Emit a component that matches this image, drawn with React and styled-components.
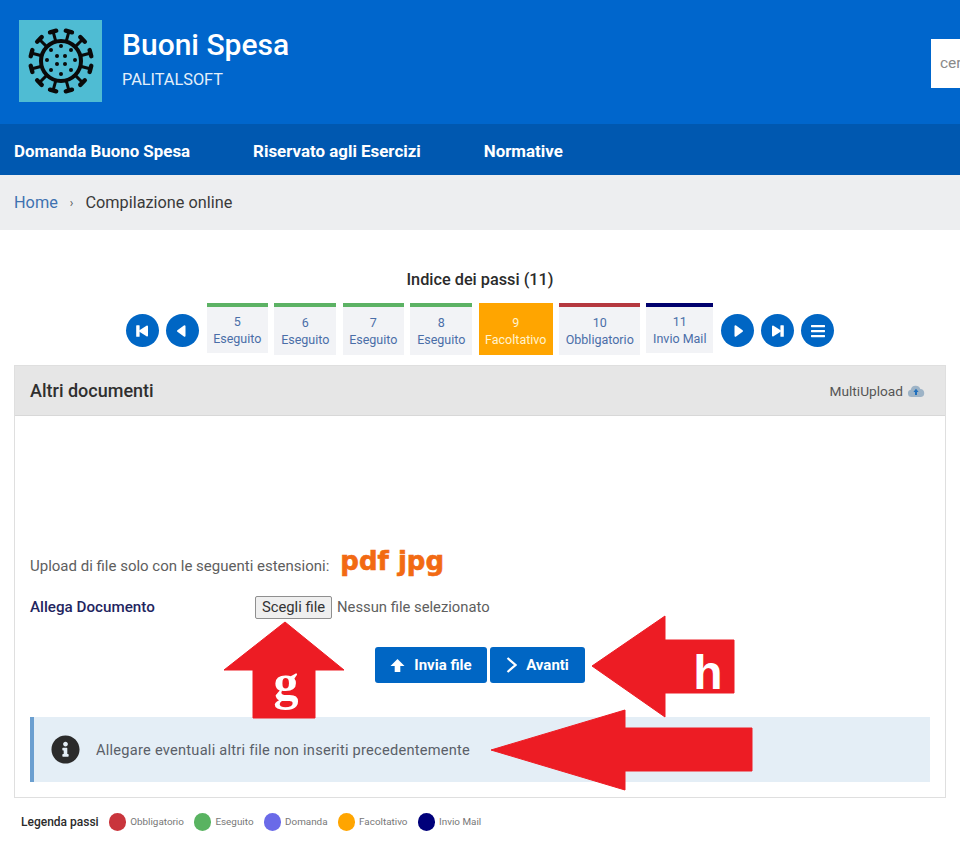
import styled, { createGlobalStyle } from "styled-components";
import { FaBars, FaInfoCircle } from "react-icons/fa";

const GlobalStyle = createGlobalStyle`
  html, body {
    margin: 0;
    padding: 0;
    background: #ffffff;
    font-family: "Roboto", "Liberation Sans", sans-serif;
  }
  * { box-sizing: border-box; }
`;

const Page = styled.div`
  position: relative;
  width: 960px;
  height: 858px;
  overflow: hidden;
`;

// header
const Header = styled.header`
  height: 124px;
  background: #0066cc;
  display: flex;
  align-items: flex-start;
  padding: 20px 0 0 19px;
`;

const LogoBox = styled.div`
  width: 83px;
  height: 82px;
  background: #4fbcd3;
  display: flex;
  align-items: center;
  justify-content: center;
  flex-shrink: 0;
`;

const Brand = styled.div`
  margin-left: 20px;
  flex: 0 0 809px;
  color: #ffffff;
`;

const BrandTitle = styled.h1`
  margin: 6px 0 0;
  font-size: 30px;
  line-height: 38px;
  font-weight: 500;
`;

const BrandSub = styled.div`
  margin-top: 6px;
  font-size: 16.3px;
  line-height: 20px;
  color: #e3effa;
`;

const SearchBox = styled.div`
  flex: 0 0 120px;
  height: 49px;
  margin-top: 19px;
  background: #ffffff;
  color: #8a8a8a;
  font-size: 15.5px;
  line-height: 49px;
  padding-left: 9px;
`;

// nav
const Nav = styled.nav`
  height: 51px;
  background: #0058b0;
  display: flex;
  align-items: center;
  gap: 63px;
  padding-left: 14px;
`;

const NavItem = styled.a`
  color: #ffffff;
  font-size: 16.9px;
  font-weight: 700;
  position: relative;
  top: 1px;
`;

const Breadcrumb = styled.div`
  height: 55px;
  background: #edeef0;
  display: flex;
  align-items: center;
  padding-left: 14px;
  font-size: 16.3px;
  color: #3a3a3a;
`;

const Crumb = styled.a`
  color: #3f72b0;
`;

const Sep = styled.span`
  margin: 0 12px;
  font-size: 12px;
  color: #555555;
`;

// steps
const StepTitle = styled.h2`
  margin: 40px 0 0;
  text-align: center;
  font-size: 16.3px;
  line-height: 20px;
  font-weight: 500;
  color: #2b2b2b;
`;

const Steps = styled.div`
  margin-top: 13px;
  height: 52px;
  display: flex;
  justify-content: center;
  align-items: flex-start;
`;

const RoundButton = styled.button`
  width: 33px;
  height: 33px;
  margin: 11px ${(p) => p.$gapRight ?? 7}px 0 0;
  padding: 0;
  border: 0;
  border-radius: 50%;
  background: #0066c4;
  color: #ffffff;
  display: flex;
  align-items: center;
  justify-content: center;
`;

const Step = styled.div`
  width: ${(p) => p.$width}px;
  height: ${(p) => (p.$short ? 50 : 52)}px;
  margin-right: ${(p) => p.$gapRight ?? 6.5}px;
  border-top: 4px solid ${(p) => p.$color};
  background: ${(p) => (p.$active ? "#ffa500" : "#f2f3f6")};
  color: ${(p) => (p.$active ? "#fff3cf" : "#4a6ea8")};
  font-size: 12.5px;
  line-height: 17px;
  text-align: center;
  padding-top: ${(p) => (p.$short ? 6 : 7)}px;
`;

// panel
const Panel = styled.section`
  margin: 10px 14px 0;
  height: 433px;
  border: 1px solid #dfdfdf;
  display: flex;
  flex-direction: column;
`;

const PanelHead = styled.div`
  height: 50px;
  background: #e6e6e6;
  border-bottom: 1px solid #d8d8d8;
  display: flex;
  align-items: center;
  justify-content: space-between;
  padding: 0 20px 0 15px;
`;

const PanelTitle = styled.h3`
  margin: 0;
  font-size: 18px;
  font-weight: 500;
  color: #2f2f2f;
`;

const MultiUpload = styled.div`
  display: flex;
  align-items: center;
  gap: 4px;
  font-size: 13.7px;
  color: #555555;
`;

const PanelBody = styled.div`
  flex: 1;
  padding: 133px 15px 0;
  display: flex;
  flex-direction: column;
`;

const UploadRow = styled.div`
  height: 34px;
  display: flex;
  align-items: center;
  color: #5e5e5e;
  font-size: 15px;
`;

const Extensions = styled.span`
  margin-left: 11px;
  font-family: "DejaVu Sans", sans-serif;
  font-weight: 700;
  font-size: 26px;
  line-height: 30px;
  -webkit-text-stroke: 0.6px #f26a13;
  color: #f26a13;
  position: relative;
  top: -5px;
`;

const FileRow = styled.div`
  margin-top: 12px;
  height: 24px;
  display: flex;
  align-items: center;
  color: #5e5e5e;
  font-size: 14.8px;
`;

const FileLabel = styled.label`
  width: 225px;
  font-weight: 500;
  font-size: 15.2px;
  color: #1f2560;
`;

const FileButton = styled.button`
  width: 77px;
  height: 23px;
  margin-right: 5px;
  padding: 0;
  background: #efefef;
  border: 1px solid #8f8f8f;
  border-radius: 2px;
  font: inherit;
  color: #333333;
`;

const Actions = styled.div`
  margin-top: 28px;
  padding-left: 345px;
  display: flex;
  gap: 3px;
`;

const ActionButton = styled.button`
  height: 36px;
  width: ${(p) => p.$width}px;
  padding: 0;
  border: 0;
  border-radius: 3px;
  background: #0066c4;
  color: #ffffff;
  font: inherit;
  font-size: 15px;
  font-weight: 700;
  display: flex;
  align-items: center;
  justify-content: center;
  gap: 9px;
`;

const Notice = styled.div`
  margin-top: 34px;
  height: 65px;
  background: #e4eef6;
  border-left: 4px solid #6b9fd0;
  display: flex;
  align-items: center;
  gap: 16px;
  padding-left: 17px;
  color: #5a6068;
  font-size: 14.6px;
  letter-spacing: 0.25px;
`;

// legend
const Legend = styled.div`
  margin-top: 15px;
  padding-left: 21px;
  display: flex;
  align-items: center;
  color: #777777;
  font-size: 9.9px;
`;

const LegendTitle = styled.span`
  margin-right: 10px;
  font-size: 12px;
  font-weight: 500;
  color: #2b2b2b;
`;

const Dot = styled.span`
  width: 17.5px;
  height: 17.5px;
  margin-right: 4px;
  border-radius: 50%;
  background: ${(p) => p.$color};
`;

const LegendItem = styled.span`
  margin-right: 10px;
`;

// red annotation arrows lying over the page
const Arrow = styled.svg`
  position: absolute;
  left: ${(p) => p.$left}px;
  top: ${(p) => p.$top}px;
  pointer-events: none;
`;

const ArrowShape = styled.path`
  fill: #ed1c24;
  stroke: #ed1c24;
  stroke-width: 1;
  stroke-linejoin: round;
`;

const ArrowLetter = styled.text`
  fill: #ffffff;
  font-weight: 700;
  font-family: ${(p) => p.$font};
  font-size: ${(p) => p.$size}px;
`;

const STEPS = [
  { n: 5, label: "Eseguito", color: "#5cb264", width: 61, short: true },
  { n: 6, label: "Eseguito", color: "#5cb264", width: 62 },
  { n: 7, label: "Eseguito", color: "#5cb264", width: 61 },
  { n: 8, label: "Eseguito", color: "#5cb264", width: 62 },
  { n: 9, label: "Facoltativo", color: "#ffa500", width: 74, active: true },
  { n: 10, label: "Obbligatorio", color: "#b5383f", width: 81, gapRight: 6 },
  { n: 11, label: "Invio Mail", color: "#00006e", width: 67, short: true, gapRight: 8 },
];

const LEGEND = [
  ["Obbligatorio", "#c9353c"],
  ["Eseguito", "#59b361"],
  ["Domanda", "#6a6ae8"],
  ["Facoltativo", "#ffa500"],
  ["Invio Mail", "#00007a"],
];

const VirusLogo = () => {
  const spikes = Array.from({ length: 12 }, (_, i) => 15 + i * 30);
  const dots = [
    [0, -15], [-10, -11], [10, -11], [-14, -1], [14, -1], [-4, -5], [4, -5],
    [-4, 3], [4, 3], [-10, 9], [10, 9], [0, 13],
  ];
  return (
    <svg width="70" height="70" viewBox="-35 -35 70 70">
      <circle r="20" fill="none" stroke="#0a0a0a" strokeWidth="4" />
      {spikes.map((a) => (
        <g key={a} transform={`rotate(${a})`}>
          <line x1="0" y1="-21" x2="0" y2="-30" stroke="#0a0a0a" strokeWidth="3" />
          <line x1="-3.2" y1="-30.5" x2="3.2" y2="-30.5" stroke="#0a0a0a" strokeWidth="4.4" strokeLinecap="round" />
        </g>
      ))}
      {dots.map(([x, y]) => (
        <circle key={`${x}${y}`} cx={x} cy={y} r="2" fill="#0a0a0a" />
      ))}
    </svg>
  );
};

const Triangle = ({ flip, bar }) => (
  <svg width="14" height="14" viewBox="0 0 14 14" style={flip ? { transform: "scaleX(-1)" } : undefined}>
    <path
      d={bar ? "M2 2.5 L9 7 L2 11.5 Z" : "M4.5 2.2 L11 7 L4.5 11.8 Z"}
      fill="#fff"
      stroke="#fff"
      strokeWidth="2"
      strokeLinejoin="round"
    />
    {bar && <rect x="9.4" y="1.2" width="3.4" height="11.6" rx="0.6" fill="#fff" />}
  </svg>
);

const CloudIcon = () => (
  <svg width="18" height="14" viewBox="0 0 18 14">
    <path
      d="M4.5 13 A3.7 3.7 0 0 1 3.8 5.7 A5 5 0 0 1 13.3 4.9 A4.1 4.1 0 0 1 14 13 Z"
      fill="#9db3c6"
    />
    <path d="M9 4.8 L11.6 8 H10 V11 H8 V8 H6.4 Z" fill="#1f6fbd" />
  </svg>
);

const UpArrowIcon = () => (
  <svg width="15" height="15" viewBox="0 0 16 15">
    <path d="M8 0.5 L15.5 8 H11 V14.5 H5 V8 H0.5 Z" fill="#fff" />
  </svg>
);

const ChevronIcon = () => (
  <svg width="11" height="16" viewBox="0 0 11 16">
    <path d="M1.5 1 L9.5 8 L1.5 15" fill="none" stroke="#fff" strokeWidth="2.2" />
  </svg>
);

const LegendEntry = ({ label, color }) => (
  <>
    <Dot $color={color} />
    <LegendItem>{label}</LegendItem>
  </>
);

const App = () => {
  return (
    <Page>
      <GlobalStyle />
      <Header>
        <LogoBox>
          <VirusLogo />
        </LogoBox>
        <Brand>
          <BrandTitle>Buoni Spesa</BrandTitle>
          <BrandSub>PALITALSOFT</BrandSub>
        </Brand>
        <SearchBox>cerca</SearchBox>
      </Header>

      <Nav>
        <NavItem>Domanda Buono Spesa</NavItem>
        <NavItem>Riservato agli Esercizi</NavItem>
        <NavItem>Normative</NavItem>
      </Nav>

      <Breadcrumb>
        <Crumb>Home</Crumb>
        <Sep>›</Sep>
        Compilazione online
      </Breadcrumb>

      <StepTitle>Indice dei passi (11)</StepTitle>
      <Steps>
        <RoundButton aria-label="Primo"><Triangle flip bar /></RoundButton>
        <RoundButton aria-label="Precedente" $gapRight={8}><Triangle flip /></RoundButton>
        {STEPS.map((s) => (
          <Step
            key={s.n}
            $width={s.width}
            $color={s.color}
            $active={s.active}
            $short={s.short}
            $gapRight={s.gapRight}
          >
            {s.n}
            <br />
            {s.label}
          </Step>
        ))}
        <RoundButton aria-label="Successivo"><Triangle /></RoundButton>
        <RoundButton aria-label="Ultimo"><Triangle bar /></RoundButton>
        <RoundButton aria-label="Indice" $gapRight={0}><FaBars size={16} /></RoundButton>
      </Steps>

      <Panel>
        <PanelHead>
          <PanelTitle>Altri documenti</PanelTitle>
          <MultiUpload>
            MultiUpload <CloudIcon />
          </MultiUpload>
        </PanelHead>
        <PanelBody>
          <UploadRow>
            Upload di file solo con le seguenti estensioni:
            <Extensions>pdf jpg</Extensions>
          </UploadRow>
          <FileRow>
            <FileLabel>Allega Documento</FileLabel>
            <FileButton>Scegli file</FileButton>
            Nessun file selezionato
          </FileRow>
          <Actions>
            <ActionButton $width={112}><UpArrowIcon /> Invia file</ActionButton>
            <ActionButton $width={95}><ChevronIcon /> Avanti</ActionButton>
          </Actions>
          <Notice>
            <FaInfoCircle size={29} color="#2b2b2b" />
            Allegare eventuali altri file non inseriti precedentemente
          </Notice>
        </PanelBody>
      </Panel>

      <Legend>
        <LegendTitle>Legenda passi</LegendTitle>
        {LEGEND.map(([label, color]) => (
          <LegendEntry key={label} label={label} color={color} />
        ))}
      </Legend>

      <Arrow $left={223} $top={621} width="122" height="98" viewBox="0 0 122 98">
        <ArrowShape d="M62 1 L121 49 H92 V97 H30 V49 H1 Z" />
        <ArrowLetter x="63" y="78" textAnchor="middle" $font='"Liberation Serif", serif' $size={50}>g</ArrowLetter>
      </Arrow>
      <Arrow $left={591} $top={615} width="145" height="103" viewBox="0 0 145 103">
        <ArrowShape d="M1 51 L74 1 V25 H143 V78 H74 V102 Z" />
        <ArrowLetter x="117" y="74" textAnchor="middle" $font='"Liberation Sans", sans-serif' $size={48}>h</ArrowLetter>
      </Arrow>
      <Arrow $left={490} $top={709} width="264" height="82" viewBox="0 0 264 82">
        <ArrowShape d="M1 41 L135 1 V19 H262 V62 H135 V81 Z" />
      </Arrow>
    </Page>
  );
};

export default App;
